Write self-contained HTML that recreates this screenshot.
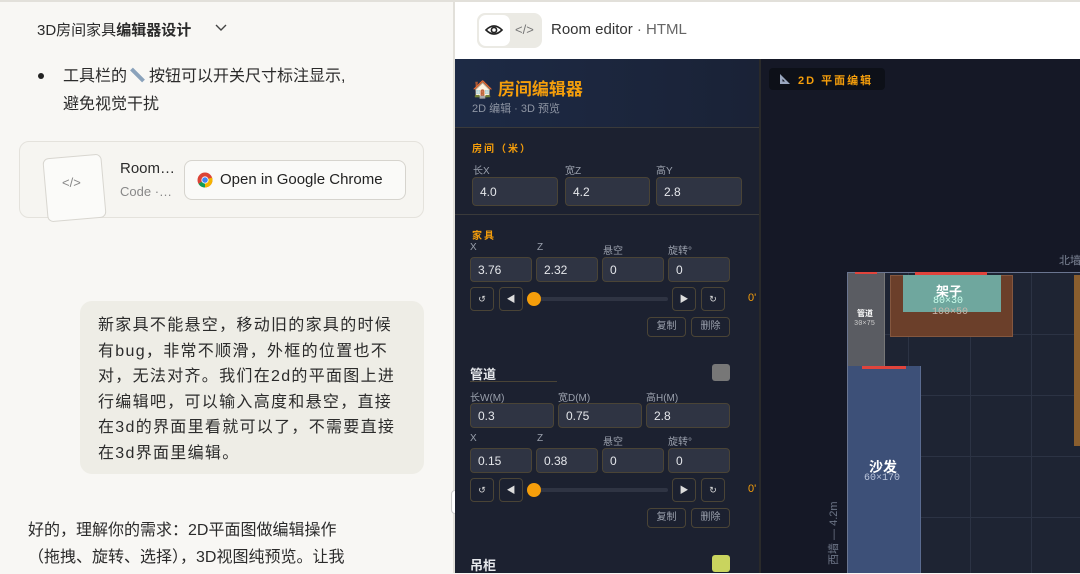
<!DOCTYPE html>
<html><head><meta charset="utf-8"><style>
*{box-sizing:border-box;margin:0;padding:0}
body{width:1080px;height:573px;overflow:hidden;position:relative;background:#f8f7f4;font-family:"Liberation Sans","Noto Sans CJK SC",sans-serif}
.a{position:absolute;white-space:nowrap}
.inp{position:absolute;background:#2f3443;border:1px solid #4a4436;border-radius:4px;color:#e5e7eb;font-size:12px;padding-left:7px;line-height:26px}
.lbl{position:absolute;color:#9aa0ac;font-size:10px}
.btn{position:absolute;width:24px;height:24px;border:1px solid #4a4436;border-radius:4px;color:#ddd;font-size:9px;text-align:center;line-height:22px}
.sb{position:absolute;height:20px;border:1px solid #4a4436;border-radius:4px;color:#9aa0ac;font-size:10px;text-align:center;line-height:18px;width:39px}
</style></head><body>
<div class="a" style="left:0;top:0;width:1080px;height:2px;background:#e2e0da"></div>
<div class="a" style="left:37px;top:19px;font-size:15px;color:#2b2b2b">3D房间家具<b>编辑器设计</b></div>
<svg class="a" style="left:214px;top:23px" width="14" height="10"><path d="M2 2l5 5 5-5" stroke="#444" stroke-width="1.4" fill="none"/></svg>
<div class="a" style="left:38px;top:73px;width:6px;height:6px;border-radius:50%;background:#222"></div>
<div class="a" style="left:63px;top:63px;font-size:16px;color:#2b2b2b;line-height:28px">工具栏的<span style="display:inline-block;width:17px;height:4px;background:#8aa2bb;transform:rotate(45deg);margin:0 3px 4px 2px"></span>按钮可以开关尺寸标注显示,<br>避免视觉干扰</div>
<div class="a" style="left:19px;top:141px;width:405px;height:77px;border:1px solid #e4e2dc;border-radius:10px;background:#f6f5f1"></div>
<div class="a" style="left:45px;top:156px;width:59px;height:64px;border:1px solid #d8d6d0;border-radius:6px;background:#fbfbf9;transform:rotate(-5deg)"></div>
<div class="a" style="left:62px;top:175px;font-size:13px;color:#888">&lt;/&gt;</div>
<div class="a" style="left:120px;top:160px;font-size:15px;color:#2b2b2b">Room…</div>
<div class="a" style="left:120px;top:184px;font-size:13px;color:#888">Code ·…</div>
<div class="a" style="left:184px;top:160px;width:222px;height:40px;border:1px solid #d6d4ce;border-radius:8px;background:#fafaf8"></div>
<svg class="a" style="left:197px;top:172px" width="16" height="16" viewBox="0 0 16 16"><circle cx="8" cy="8" r="7.5" fill="#db4437"/><path d="M8 8 L1.5 11.7 A7.5 7.5 0 0 0 8 15.5 Z" fill="#0f9d58"/><path d="M8 8 L8 15.5 A7.5 7.5 0 0 0 15.1 5.5 Z" fill="#f4b400"/><circle cx="8" cy="8" r="3.6" fill="#fff"/><circle cx="8" cy="8" r="2.8" fill="#4285f4"/></svg>
<div class="a" style="left:220px;top:171px;font-size:15px;color:#222">Open in Google Chrome</div>
<div class="a" style="left:80px;top:301px;width:344px;height:173px;background:#eeede6;border-radius:12px"></div>
<div class="a" style="left:98px;top:313px;font-size:16px;color:#2b2b2b;line-height:25.5px;letter-spacing:1.3px">新家具不能悬空，移动旧的家具的时候<br>有bug，非常不顺滑，外框的位置也不<br>对，无法对齐。我们在2d的平面图上进<br>行编辑吧，可以输入高度和悬空，直接<br>在3d的界面里看就可以了，不需要直接<br>在3d界面里编辑。</div>
<div class="a" style="left:28px;top:517px;font-size:16px;color:#2b2b2b;line-height:27px">好的，理解你的需求：2D平面图做编辑操作<br>（拖拽、旋转、选择），3D视图纯预览。让我</div>
<div class="a" style="left:453px;top:0;width:2px;height:573px;background:#e2e0da"></div>
<div class="a" style="left:451px;top:490px;width:8px;height:24px;border-radius:4px;background:#fff;border:1px solid #ccc"></div>
<div class="a" style="left:455px;top:2px;width:625px;height:57px;background:#fff"></div>
<div class="a" style="left:477px;top:13px;width:65px;height:35px;border-radius:8px;background:#ebeae4"></div>
<div class="a" style="left:479px;top:15px;width:31px;height:31px;border-radius:7px;background:#fff"></div>
<svg class="a" style="left:484px;top:22px" width="20" height="16"><path d="M2 8 Q10 0 18 8 Q10 16 2 8Z" stroke="#222" stroke-width="1.6" fill="none"/><circle cx="10" cy="8" r="2.6" stroke="#222" stroke-width="1.6" fill="none"/></svg>
<div class="a" style="left:515px;top:22px;font-size:13px;color:#777">&lt;/&gt;</div>
<div class="a" style="left:551px;top:21px;font-size:15px;color:#333">Room editor <span style="color:#666">· HTML</span></div>
<div class="a" style="left:455px;top:59px;width:305px;height:514px;background:#1c2130"></div>
<div class="a" style="left:455px;top:59px;width:305px;height:68px;background:linear-gradient(90deg,#1d2a45,#1a2236)"></div>
<div class="a" style="left:472px;top:75px;font-size:17px;color:#f59e0b;font-weight:bold">🏠 房间编辑器</div>
<div class="a" style="left:472px;top:100px;font-size:11px;color:#8e95a3">2D 编辑 · 3D 预览</div>
<div class="a" style="left:455px;top:127px;width:305px;height:1px;background:#3a3a3a"></div>
<div class="a" style="left:472px;top:140px;font-size:10px;color:#f59e0b;font-weight:bold;letter-spacing:2px">房间（米）</div>
<div class="lbl" style="left:473px;top:162px">长X</div><div class="lbl" style="left:565px;top:162px">宽Z</div><div class="lbl" style="left:656px;top:162px">高Y</div>
<div class="inp" style="left:472px;top:177px;width:86px;height:29px;line-height:28px">4.0</div>
<div class="inp" style="left:565px;top:177px;width:85px;height:29px;line-height:28px">4.2</div>
<div class="inp" style="left:656px;top:177px;width:86px;height:29px;line-height:28px">2.8</div>
<div class="a" style="left:455px;top:214px;width:305px;height:1px;background:#3a3a3a"></div>
<div class="a" style="left:472px;top:227px;font-size:10px;color:#f59e0b;font-weight:bold;letter-spacing:2px">家具</div>
<div class="lbl" style="left:470px;top:242px">X</div><div class="lbl" style="left:537px;top:242px">Z</div><div class="lbl" style="left:603px;top:242px">悬空</div><div class="lbl" style="left:668px;top:242px">旋转°</div>
<div class="inp" style="left:470px;top:257px;width:62px;height:25px;line-height:24px">3.76</div>
<div class="inp" style="left:536px;top:257px;width:62px;height:25px;line-height:24px">2.32</div>
<div class="inp" style="left:602px;top:257px;width:62px;height:25px;line-height:24px">0</div>
<div class="inp" style="left:668px;top:257px;width:62px;height:25px;line-height:24px">0</div>
<div class="btn" style="left:470px;top:287px">↺</div><div class="btn" style="left:499px;top:287px">◀</div>
<div class="a" style="left:533px;top:297px;width:135px;height:4px;border-radius:2px;background:#2f3443"></div>
<div class="a" style="left:527px;top:292px;width:14px;height:14px;border-radius:50%;background:#f59e0b"></div>
<div class="btn" style="left:672px;top:287px">▶</div><div class="btn" style="left:701px;top:287px">↻</div>
<div class="a" style="left:748px;top:292px;font-size:11px;color:#f59e0b">0'</div>
<div class="sb" style="left:647px;top:317px">复制</div><div class="sb" style="left:691px;top:317px">删除</div>
<div class="a" style="left:470px;top:364px;font-size:13px;color:#e5e7eb;font-weight:bold">管道</div>
<div class="a" style="left:470px;top:381px;width:87px;height:1px;background:#4a4436"></div>
<div class="a" style="left:712px;top:364px;width:18px;height:17px;border-radius:3px;background:#777"></div>
<div class="lbl" style="left:470px;top:389px">长W(M)</div><div class="lbl" style="left:558px;top:389px">宽D(M)</div><div class="lbl" style="left:646px;top:389px">高H(M)</div>
<div class="inp" style="left:470px;top:403px;width:84px;height:25px;line-height:24px">0.3</div>
<div class="inp" style="left:558px;top:403px;width:84px;height:25px;line-height:24px">0.75</div>
<div class="inp" style="left:646px;top:403px;width:84px;height:25px;line-height:24px">2.8</div>
<div class="lbl" style="left:470px;top:433px">X</div><div class="lbl" style="left:537px;top:433px">Z</div><div class="lbl" style="left:603px;top:433px">悬空</div><div class="lbl" style="left:668px;top:433px">旋转°</div>
<div class="inp" style="left:470px;top:448px;width:62px;height:25px;line-height:24px">0.15</div>
<div class="inp" style="left:536px;top:448px;width:62px;height:25px;line-height:24px">0.38</div>
<div class="inp" style="left:602px;top:448px;width:62px;height:25px;line-height:24px">0</div>
<div class="inp" style="left:668px;top:448px;width:62px;height:25px;line-height:24px">0</div>
<div class="btn" style="left:470px;top:478px">↺</div><div class="btn" style="left:499px;top:478px">◀</div>
<div class="a" style="left:533px;top:488px;width:135px;height:4px;border-radius:2px;background:#2f3443"></div>
<div class="a" style="left:527px;top:483px;width:14px;height:14px;border-radius:50%;background:#f59e0b"></div>
<div class="btn" style="left:672px;top:478px">▶</div><div class="btn" style="left:701px;top:478px">↻</div>
<div class="a" style="left:748px;top:483px;font-size:11px;color:#f59e0b">0'</div>
<div class="sb" style="left:647px;top:508px">复制</div><div class="sb" style="left:691px;top:508px">删除</div>
<div class="a" style="left:470px;top:555px;font-size:13px;color:#e5e7eb;font-weight:bold">吊柜</div>
<div class="a" style="left:712px;top:555px;width:18px;height:17px;border-radius:3px;background:#c9d45e"></div>
<div class="a" style="left:759px;top:59px;width:2px;height:514px;background:#2a2a2a"></div>
<div class="a" style="left:761px;top:59px;width:319px;height:514px;background:#151826"></div>
<div class="a" style="left:769px;top:68px;width:116px;height:22px;border-radius:4px;background:#0d1018"></div>
<svg class="a" style="left:779px;top:73px" width="12" height="12"><path d="M1 1V11H11Z" fill="#9aa7bf"/><path d="M3.5 6V8.5H6Z" fill="#0d1018"/></svg>
<div class="a" style="left:798px;top:72px;font-size:11px;color:#f59e0b;font-weight:bold;letter-spacing:2px">2D 平面编辑</div>
<div class="a" style="left:1059px;top:252px;font-size:11px;color:#7d8596">北墙</div>
<div class="a" style="left:847px;top:272px;width:233px;height:301px;background:#1e2433;border-top:1px solid #6a7590;border-left:1px solid #6a7590"></div>
<div class="a" style="left:908px;top:273px;width:1px;height:300px;background:#2c3344"></div>
<div class="a" style="left:970px;top:273px;width:1px;height:300px;background:#2c3344"></div>
<div class="a" style="left:1031px;top:273px;width:1px;height:300px;background:#2c3344"></div>
<div class="a" style="left:848px;top:334px;width:232px;height:1px;background:#2c3344"></div>
<div class="a" style="left:848px;top:395px;width:232px;height:1px;background:#2c3344"></div>
<div class="a" style="left:848px;top:456px;width:232px;height:1px;background:#2c3344"></div>
<div class="a" style="left:848px;top:517px;width:232px;height:1px;background:#2c3344"></div>
<div class="a" style="left:848px;top:273px;width:37px;height:94px;background:#5a5c62;border-right:1px solid #777"></div>
<div class="a" style="left:855px;top:272px;width:22px;height:2px;background:#e0443c"></div>
<div class="a" style="left:857px;top:308px;font-size:8px;color:#fff;font-weight:bold">管道</div>
<div class="a" style="left:854px;top:320px;font-size:7px;color:#ccc;font-family:'Liberation Mono',monospace">30×75</div>
<div class="a" style="left:890px;top:275px;width:123px;height:62px;background:#6b3f2a;border:1px solid #84573f"></div>
<div class="a" style="left:903px;top:275px;width:98px;height:37px;background:#6fa79e"></div>
<div class="a" style="left:915px;top:272px;width:72px;height:3px;background:#e0443c"></div>
<div class="a" style="left:936px;top:281px;font-size:13px;color:#fff;font-weight:bold">架子</div>
<div class="a" style="left:933px;top:296px;font-size:10px;color:#cfe;font-family:'Liberation Mono',monospace">80×30</div>
<div class="a" style="left:932px;top:307px;font-size:10px;color:#c9b8ad;font-family:'Liberation Mono',monospace">100×50</div>
<div class="a" style="left:1074px;top:275px;width:6px;height:171px;background:#8a5e2e"></div>
<div class="a" style="left:848px;top:366px;width:73px;height:207px;background:#3d5078;border-right:1px solid #5a6b90"></div>
<div class="a" style="left:862px;top:366px;width:44px;height:3px;background:#e0443c"></div>
<div class="a" style="left:869px;top:457px;font-size:14px;color:#fff;font-weight:bold">沙发</div>
<div class="a" style="left:864px;top:473px;font-size:10px;color:#bcc6dc;font-family:'Liberation Mono',monospace">60×170</div>
<div class="a" style="left:825px;top:565px;font-size:11px;color:#6d7587;transform-origin:0 0;transform:rotate(-90deg)">西墙 — 4.2m</div>
</body></html>
